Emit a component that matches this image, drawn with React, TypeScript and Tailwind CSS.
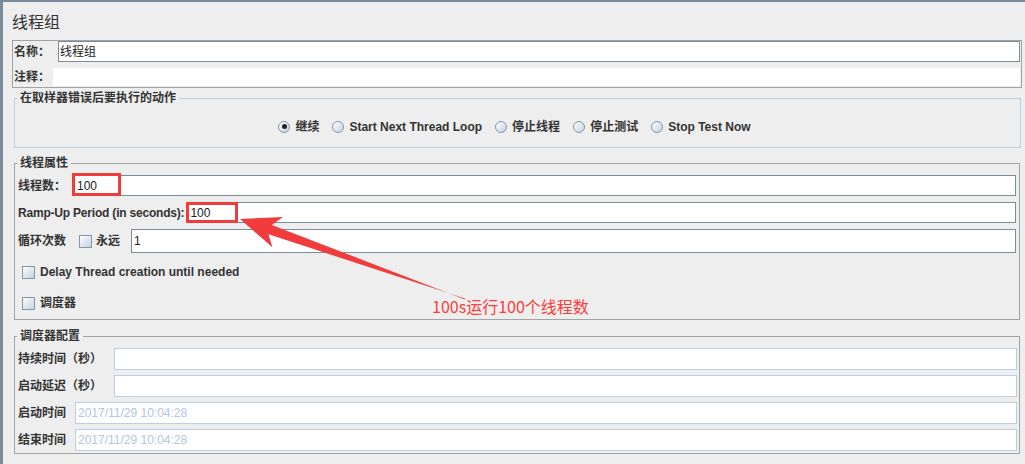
import React from "react";

const FONT = "font-['Liberation_Sans','Noto_Sans_CJK_SC',sans-serif]";

function Radio({ checked, label }: { checked?: boolean; label: string }) {
  return (
    <div className="flex items-center gap-[5px]">
      <span className="w-[12px] h-[12px] rounded-full border border-[#8796a5] bg-linear-to-br from-white to-[#c3d2e2] flex items-center justify-center">
        {checked && <span className="w-[5px] h-[5px] rounded-full bg-[#222]" />}
      </span>
      <span className="text-[12px] font-bold text-[#333] leading-[16px]">{label}</span>
    </div>
  );
}

function Check() {
  return <span className="w-[13px] h-[13px] border border-[#8796a5] bg-linear-to-br from-white to-[#c3d2e2] shrink-0" />;
}

function Field({ value, h = "h-[21px]" }: { value?: string; h?: string }) {
  return (
    <div className={`flex-1 ${h} bg-white border border-[#7d8c9b] flex items-center pl-[2px] text-[12px] text-[#222] leading-[14px]`}>
      {value}
    </div>
  );
}

function SchedField({ value }: { value?: string }) {
  return (
    <div className="flex-1 h-[22px] bg-[#fefefe] border border-[#b8cfe5] flex items-center pl-[2px] text-[12px] text-[#b4c7dc] leading-[14px]">
      {value}
    </div>
  );
}

export default function App() {
  return (
    <div className={`relative w-[1025px] h-[464px] overflow-hidden ${FONT}`}>
      <div className="w-full h-full bg-[#eeeeee] border-t-2 border-l-[3px] border-[#7b8a9a] pl-[9px] pr-[3px] flex flex-col">
        <div className="h-[38px] pt-[11px] text-[16px] leading-[20px] text-[#333]">线程组</div>

        <div className="h-[48px] border border-[#a3a3a3] flex flex-col pt-[0px]">
          <div className="h-[21px] flex items-center">
            <span className="w-[45px] pl-[1px] text-[12px] font-bold text-[#333] leading-[16px]">名称：</span>
            <div className="flex-1 h-[21px] bg-white border border-[#7d8c9b] mr-[1px] flex items-center pl-[1px] text-[12px] text-[#222] leading-[14px]">
              线程组
            </div>
          </div>
          <div className="h-[18px] mt-[6px] flex items-center">
            <span className="w-[40px] pl-[1px] text-[12px] font-bold text-[#333] leading-[16px]">注释：</span>
            <div className="flex-1 h-[18px] bg-white mr-[1px]" />
          </div>
        </div>

        <fieldset className="mt-[2px] ml-[2px] mr-[1px] border border-[#b8cfe5]">
          <legend className="ml-[2px] px-[3px] text-[12px] font-bold text-[#333] leading-[16px]">在取样器错误后要执行的动作</legend>
          <div className="h-[41px] flex items-center justify-center gap-[13px] pr-[6px]">
            <Radio checked label="继续" />
            <Radio label="Start Next Thread Loop" />
            <Radio label="停止线程" />
            <Radio label="停止测试" />
            <Radio label="Stop Test Now" />
          </div>
        </fieldset>

        <fieldset className="mt-[7px] ml-[2px] mr-[2px] border border-[#a3a3a3]">
          <legend className="ml-[2px] px-[3px] text-[12px] font-bold text-[#333] leading-[16px]">线程属性</legend>
          <div className="h-[148px] flex flex-col pl-[3px] pr-[3px]">
            <div className="mt-[4px] h-[21px] flex items-center">
              <span className="w-[55px] text-[12px] font-bold text-[#333] leading-[16px]">线程数：</span>
              <div className="flex-1 h-[21px] bg-white border border-[#7d8c9b] flex items-center pl-[3px] text-[12px] text-[#222] leading-[14px]">100</div>
            </div>
            <div className="mt-[6px] h-[21px] flex items-center">
              <span className="mr-[3px] text-[12px] font-bold text-[#333] leading-[16px] whitespace-nowrap tracking-[-0.2px]">Ramp-Up Period (in seconds):</span>
              <Field value="100" />
            </div>
            <div className="mt-[6px] h-[24px] flex items-center">
              <span className="w-[61px] text-[12px] font-bold text-[#333] leading-[16px] whitespace-nowrap">循环次数</span>
              <Check />
              <span className="ml-[4px] w-[35px] text-[12px] font-bold text-[#333] leading-[16px]">永远</span>
              <Field value="1" h="h-[24px]" />
            </div>
            <div className="mt-[7px] h-[24px] flex items-center pl-[4px] gap-[5px]">
              <Check />
              <span className="text-[12px] font-bold text-[#333] leading-[16px]">Delay Thread creation until needed</span>
            </div>
            <div className="mt-[7px] h-[24px] flex items-center pl-[4px] gap-[5px]">
              <Check />
              <span className="text-[12px] font-bold text-[#333] leading-[16px]">调度器</span>
            </div>
          </div>
        </fieldset>

        <fieldset className="mt-[8px] ml-[2px] mr-[2px] border border-[#a3a3a3]">
          <legend className="ml-[2px] px-[3px] text-[12px] font-bold text-[#333] leading-[16px]">调度器配置</legend>
          <div className="h-[109px] flex flex-col pl-[3px] pr-[2px] pt-[4px] gap-[5px]">
            <div className="h-[22px] flex items-center">
              <span className="w-[96px] text-[12px] font-bold text-[#333] leading-[16px] whitespace-nowrap">持续时间（秒）</span>
              <SchedField />
            </div>
            <div className="h-[22px] flex items-center">
              <span className="w-[96px] text-[12px] font-bold text-[#333] leading-[16px] whitespace-nowrap">启动延迟（秒）</span>
              <SchedField />
            </div>
            <div className="h-[22px] flex items-center">
              <span className="w-[57px] text-[12px] font-bold text-[#333] leading-[16px] whitespace-nowrap">启动时间</span>
              <SchedField value="2017/11/29 10:04:28" />
            </div>
            <div className="h-[22px] flex items-center">
              <span className="w-[57px] text-[12px] font-bold text-[#333] leading-[16px] whitespace-nowrap">结束时间</span>
              <SchedField value="2017/11/29 10:04:28" />
            </div>
          </div>
        </fieldset>
      </div>

      {/* annotations */}
      <div className="absolute left-[72px] top-[173px] w-[49px] h-[23px] border-[3px] border-[#f03c3c] pointer-events-none" />
      <div className="absolute left-[186px] top-[202px] w-[52px] h-[21px] border-[3px] border-[#f03c3c] pointer-events-none" />
      <svg className="absolute left-0 top-0 pointer-events-none" width="1025" height="464" viewBox="0 0 1025 464">
        <polygon points="240,219 283,217 271.8,224.9 465,299.5 465,298.5 268.5,234.3 272.4,247.3" fill="#f03c3c" />
      </svg>
      <div className="absolute left-[432px] top-[296px] text-[16px] leading-[20px] text-[#ff3b3b] font-['Noto_Sans_CJK_SC',sans-serif] whitespace-nowrap pointer-events-none">
        100s运行100个线程数
      </div>
    </div>
  );
}
